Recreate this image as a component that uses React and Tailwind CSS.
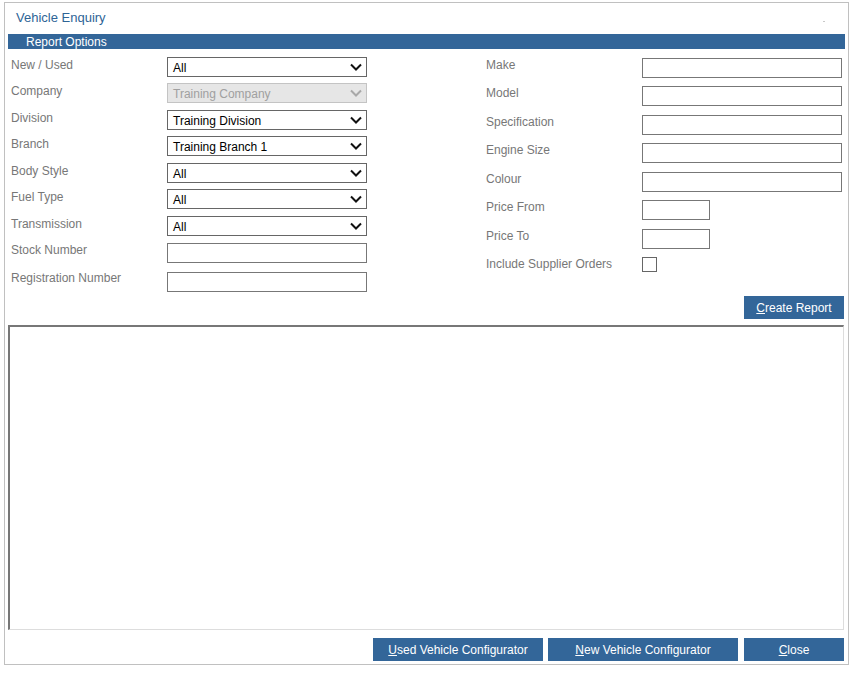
import React from "react";

const font = { fontFamily: '"Liberation Sans", Arial, sans-serif' };

const leftRows = [
  { label: "New / Used", type: "select", value: "All", h: "h-[26px]", lm: "mt-[1px]" },
  { label: "Company", type: "disabled", value: "Training Company", h: "h-[27px]", lm: "mt-[1px]" },
  { label: "Division", type: "select", value: "Training Division", h: "h-[26px]", lm: "mt-[1px]" },
  { label: "Branch", type: "select", value: "Training Branch 1", h: "h-[27px]", lm: "mt-[1px]" },
  { label: "Body Style", type: "select", value: "All", h: "h-[26px]", lm: "mt-[1px]" },
  { label: "Fuel Type", type: "select", value: "All", h: "h-[27px]", lm: "mt-[1px]" },
  { label: "Transmission", type: "select", value: "All", h: "h-[27px]", lm: "mt-[1px]" },
  { label: "Stock Number", type: "input", h: "h-[29px]", lm: "mt-0" },
  { label: "Registration Number", type: "input", h: "h-[20px]", lm: "-mt-[1px]" },
];

const rightRows = [
  { label: "Make", type: "wide", h: "h-[28px]" },
  { label: "Model", type: "wide", h: "h-[29px]" },
  { label: "Specification", type: "wide", h: "h-[28px]" },
  { label: "Engine Size", type: "wide", h: "h-[29px]" },
  { label: "Colour", type: "wide", h: "h-[28px]" },
  { label: "Price From", type: "short", h: "h-[29px]" },
  { label: "Price To", type: "short", h: "h-[28px]" },
  { label: "Include Supplier Orders", type: "check", h: "h-[16px]" },
];

function Chevron({ color }) {
  return (
    <svg width="12" height="8" viewBox="0 0 12 8" className="shrink-0">
      <polyline
        points="1,1.5 6,6.5 11,1.5"
        fill="none"
        stroke={color}
        strokeWidth="2"
      />
    </svg>
  );
}

function Field({ row }) {
  if (row.type === "select") {
    return (
      <div className="w-[200px] h-[20px] border border-[#666] bg-white flex items-center justify-between pl-[5px] pr-[4px] text-[12px] text-black">
        <span className="pt-[2px]">{row.value}</span>
        <Chevron color="#111" />
      </div>
    );
  }
  if (row.type === "disabled") {
    return (
      <div className="w-[200px] h-[20px] border border-[#c4c4c4] bg-[#e6e6e6] flex items-center justify-between pl-[5px] pr-[4px] text-[12px] text-[#a0a0a0]">
        <span className="pt-[2px]">{row.value}</span>
        <Chevron color="#a8a8a8" />
      </div>
    );
  }
  return <div className="w-[200px] h-[20px] border border-[#777] bg-white" />;
}

function RightField({ row }) {
  if (row.type === "wide")
    return <div className="w-[200px] h-[20px] border border-[#777] bg-white" />;
  if (row.type === "short")
    return <div className="w-[68px] h-[20px] border border-[#777] bg-white" />;
  return <div className="w-[15px] h-[15px] border border-[#666] bg-white" />;
}

function BlueButton({ children, className }) {
  return (
    <button
      className={`h-[23px] bg-[#336699] text-white text-[12px] flex items-center justify-center ${className}`}
    >
      {children}
    </button>
  );
}

export default function App() {
  return (
    <div className="bg-white w-[853px] h-[686px] pt-[2px] pl-[4px]" style={font}>
      <div className="w-[845px] h-[663px] border border-[#c0c0c0] flex flex-col px-[3px]">
        <div className="h-[31px] flex items-center justify-between pl-[8px] pr-[20px]">
          <span className="text-[13px] text-[#2e6496] -mt-[2px]">Vehicle Enquiry</span>
          <span className="w-[2px] h-[1px] bg-[#c8c8c8] mt-[6px]" />
        </div>
        <div className="h-[15px] bg-[#336699] text-white text-[12px] leading-[16px] pl-[18px]">
          Report Options
        </div>

        <div className="flex h-[243px] pt-[8px]">
          <div className="flex flex-col w-[478px] pl-[3px]">
            {leftRows.map((row) => (
              <div key={row.label} className={`flex items-start ${row.h}`}>
                <span className={`w-[156px] text-[12px] leading-[14px] text-[#777] ${row.lm}`}>
                  {row.label}
                </span>
                <Field row={row} />
              </div>
            ))}
          </div>
          <div className="flex flex-col pt-[1px]">
            {rightRows.map((row) => (
              <div key={row.label} className={`flex items-start ${row.h}`}>
                <span className="w-[156px] text-[12px] leading-[14px] text-[#777]">
                  {row.label}
                </span>
                <RightField row={row} />
              </div>
            ))}
          </div>
        </div>

        <div className="flex justify-end mt-[4px] mr-[1px]">
          <BlueButton className="w-[100px]">
            <span>
              <span className="underline">C</span>reate Report
            </span>
          </BlueButton>
        </div>

        <div className="mt-[6px] mr-[1px] h-[305px] border-t-2 border-l-2 border-t-[#777] border-l-[#777] border-r border-b border-r-[#ddd] border-b-[#ddd] bg-white" />

        <div className="flex justify-end gap-[5px] mt-[8px] mr-[1px]">
          <BlueButton className="w-[170px]">
            <span>
              <span className="underline">U</span>sed Vehicle Configurator
            </span>
          </BlueButton>
          <BlueButton className="w-[190px]">
            <span>
              <span className="underline">N</span>ew Vehicle Configurator
            </span>
          </BlueButton>
          <BlueButton className="w-[100px] ml-[1px]">
            <span>
              <span className="underline">C</span>lose
            </span>
          </BlueButton>
        </div>
      </div>
    </div>
  );
}
